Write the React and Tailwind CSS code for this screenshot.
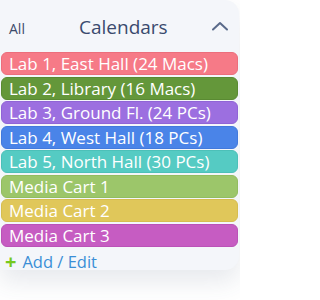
import React from 'react';

const calendars = [
  { name: 'Lab 1, East Hall (24 Macs)', color: 'bg-[#f67a87] border-[#ec6e7c]' },
  { name: 'Lab 2, Library (16 Macs)', color: 'bg-[#64973a] border-[#5a8a33]' },
  { name: 'Lab 3, Ground Fl. (24 PCs)', color: 'bg-[#9c6fe0] border-[#9064d6]' },
  { name: 'Lab 4, West Hall (18 PCs)', color: 'bg-[#4a84e8] border-[#4279dc]' },
  { name: 'Lab 5, North Hall (30 PCs)', color: 'bg-[#55cbc3] border-[#4cc0b8]' },
  { name: 'Media Cart 1', color: 'bg-[#9cc66a] border-[#92bc60]' },
  { name: 'Media Cart 2', color: 'bg-[#e0c75a] border-[#d6bd50]' },
  { name: 'Media Cart 3', color: 'bg-[#c65cc2] border-[#bb52b7]' },
];

const App = () => {
  return (
    <div className="w-[240px] h-[300px] bg-white overflow-hidden" style={{ fontFamily: '"Open Sans", sans-serif' }}>
      <div className="w-[239px] bg-[#f4f6fa] rounded-r-[14px] shadow-[0_12px_24px_rgba(60,70,110,0.12)]">
        {/* Header */}
        <div className="h-[52px] flex items-center px-[9px] pt-[2px]">
          <span className="text-[14px] text-[#3c4a6a] w-[62px] mt-[4px] leading-none">All</span>
          <span className="flex-1 text-[19px] text-[#3a4a6e] pl-[8px] leading-none">Calendars</span>
          <svg width="18" height="10" viewBox="0 0 18 10" className="mr-[1px] mb-[2px]">
            <path d="M2 8.5 L9 2 L16 8.5" fill="none" stroke="#5a6a8a" strokeWidth="2" strokeLinecap="round" strokeLinejoin="round" />
          </svg>
        </div>

        {/* Calendar list */}
        <div className="flex flex-col gap-[1.5px] px-[1px]">
          {calendars.map(cal => (
            <div
              key={cal.name}
              className={`h-[23px] rounded-[6px] border flex items-center pl-[7px] text-white text-[17px] leading-none whitespace-nowrap ${cal.color}`}
            >
              {cal.name}
            </div>
          ))}
        </div>

        {/* Add / Edit */}
        <div className="h-[15px] flex items-center pl-[5px] mt-[8px]">
          <span className="text-[#76c91e] text-[20px] font-bold leading-none mr-[6px]">+</span>
          <span className="text-[#3a8ed6] text-[16.5px] leading-none">Add / Edit</span>
        </div>
      </div>
    </div>
  );
};

export default App;
